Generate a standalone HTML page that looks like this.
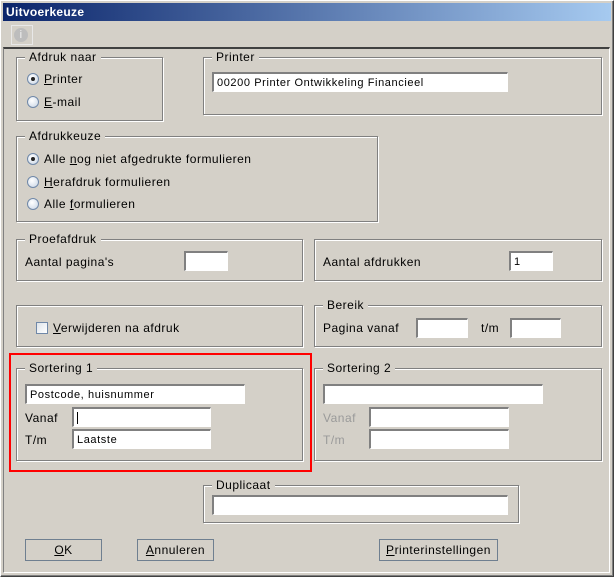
<!DOCTYPE html>
<html><head><style>
*{box-sizing:border-box;margin:0;padding:0}
body{width:614px;height:577px;background:#d4d0c8;font-family:"Liberation Sans",sans-serif;font-size:12px;letter-spacing:.5px;color:#000;position:relative;overflow:hidden}
.a{position:absolute}
.win{left:0;top:0;width:614px;height:577px;border:1px solid #fff;border-right-color:#404040;border-bottom-color:#404040;box-shadow:inset -1px -1px #808080, inset 1px 1px #d4d0c8}
.title{left:3px;top:3px;width:608px;height:18px;background:linear-gradient(90deg,#0a246a,#a6caf0);color:#fff;font-weight:bold;font-size:12px;padding:2px 0 0 3px;letter-spacing:.3px}
.panel{left:3px;top:47px;width:607px;height:526px;border-top:2px solid #404040;border-left:1px solid #808080;border-right:1px solid #fff;border-bottom:1px solid #fff}
.g{position:absolute;border:1px solid #808080;box-shadow:1px 1px 0 #fff, inset 1px 1px 0 #fff}
.lg{position:absolute;top:-8px;left:8px;background:#d4d0c8;padding:0 4px;line-height:14px}
.in{position:absolute;background:#fff;border-top:2px solid #808080;border-left:2px solid #808080;border-right:1px solid #fff;border-bottom:1px solid #fff;height:20px;padding:2px 3px;font-size:11px;letter-spacing:.6px;line-height:14px}
.t{position:absolute;line-height:14px}
.rad{position:absolute;width:12px;height:12px;border-radius:50%;background:radial-gradient(circle at 40% 35%,#fff,#c8d4e4);border:1px solid #7088a8}
.rad.on::after{content:"";position:absolute;left:3px;top:3px;width:4px;height:4px;border-radius:50%;background:#222}
.btn{position:absolute;height:22px;border:1px solid #6f7f90;background:#d4d0c8;text-align:center;line-height:20px}
u{text-decoration:underline}
.gr{color:#9a9a9a}
</style></head><body>
<div class="a win"></div>
<div class="a title">Uitvoerkeuze</div>
<div class="a" style="left:11px;top:25px;width:22px;height:20px;border:1px solid #e8e8e8"></div>
<div class="a" style="left:14px;top:28px;width:14px;height:14px;border-radius:50%;background:#bdbdbd;color:#e0e0e0;font-weight:bold;font-size:11px;text-align:center;line-height:14px">i</div>
<div class="a panel"></div>

<div class="g" style="left:16px;top:57px;width:147px;height:64px"><span class="lg">Afdruk naar</span></div>
<div class="rad on" style="left:27px;top:73px"></div><span class="t" style="left:44px;top:72px"><u>P</u>rinter</span>
<div class="rad" style="left:27px;top:96px"></div><span class="t" style="left:44px;top:95px"><u>E</u>-mail</span>

<div class="g" style="left:203px;top:57px;width:399px;height:58px"><span class="lg">Printer</span></div>
<div class="in" style="left:212px;top:72px;width:296px">00200 Printer Ontwikkeling Financieel</div>

<div class="g" style="left:16px;top:136px;width:362px;height:86px"><span class="lg">Afdrukkeuze</span></div>
<div class="rad on" style="left:27px;top:153px"></div><span class="t" style="left:44px;top:152px">Alle <u>n</u>og niet afgedrukte formulieren</span>
<div class="rad" style="left:27px;top:176px"></div><span class="t" style="left:44px;top:175px"><u>H</u>erafdruk formulieren</span>
<div class="rad" style="left:27px;top:198px"></div><span class="t" style="left:44px;top:197px">Alle <u>f</u>ormulieren</span>

<div class="g" style="left:16px;top:239px;width:287px;height:42px"><span class="lg">Proefafdruk</span></div>
<span class="t" style="left:25px;top:255px">Aantal pagina's</span>
<div class="in" style="left:184px;top:251px;width:44px"></div>

<div class="g" style="left:314px;top:239px;width:288px;height:42px"></div>
<span class="t" style="left:323px;top:255px">Aantal afdrukken</span>
<div class="in" style="left:509px;top:251px;width:44px">1</div>

<div class="g" style="left:16px;top:305px;width:287px;height:42px"></div>
<div class="a" style="left:36px;top:322px;width:12px;height:12px;border:1px solid #7088a8;background:linear-gradient(135deg,#dfe4ea,#fff)"></div>
<span class="t" style="left:53px;top:321px"><u>V</u>erwijderen na afdruk</span>

<div class="g" style="left:314px;top:305px;width:288px;height:42px"><span class="lg">Bereik</span></div>
<span class="t" style="left:323px;top:321px">Pagina vanaf</span>
<div class="in" style="left:416px;top:318px;width:52px"></div>
<span class="t" style="left:481px;top:321px">t/m</span>
<div class="in" style="left:510px;top:318px;width:51px"></div>

<div class="a" style="left:9px;top:353px;width:303px;height:119px;border:2px solid #f00"></div>
<div class="g" style="left:16px;top:368px;width:287px;height:93px"><span class="lg">Sortering 1</span></div>
<div class="in" style="left:25px;top:384px;width:220px">Postcode, huisnummer</div>
<span class="t" style="left:25px;top:411px">Vanaf</span>
<div class="in" style="left:72px;top:407px;width:139px"><span style="border-left:1px solid #000"> </span></div>
<span class="t" style="left:25px;top:433px">T/m</span>
<div class="in" style="left:72px;top:429px;width:139px">Laatste</div>

<div class="g" style="left:314px;top:368px;width:288px;height:93px"><span class="lg">Sortering 2</span></div>
<div class="in" style="left:323px;top:384px;width:220px"></div>
<span class="t gr" style="left:323px;top:411px">Vanaf</span>
<div class="in" style="left:369px;top:407px;width:140px"></div>
<span class="t gr" style="left:323px;top:433px">T/m</span>
<div class="in" style="left:369px;top:429px;width:140px"></div>

<div class="g" style="left:203px;top:485px;width:316px;height:38px"><span class="lg">Duplicaat</span></div>
<div class="in" style="left:212px;top:495px;width:296px"></div>

<div class="btn" style="left:25px;top:539px;width:77px"><u>O</u>K</div>
<div class="btn" style="left:137px;top:539px;width:77px"><u>A</u>nnuleren</div>
<div class="btn" style="left:379px;top:539px;width:119px"><u>P</u>rinterinstellingen</div>
</body></html>
